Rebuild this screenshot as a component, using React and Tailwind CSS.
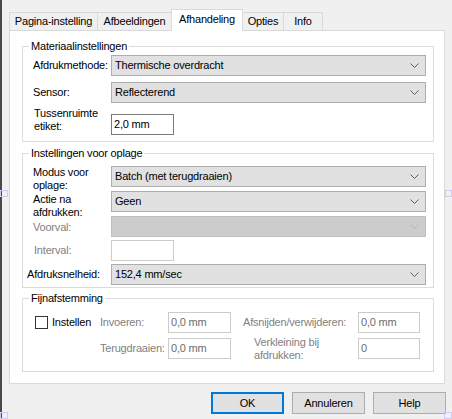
import React from "react";

const Chevron = ({ disabled }) => (
  <svg width="9" height="5" viewBox="0 0 9 5" className="shrink-0">
    <path d="M0.5 0.5 L4.5 4.5 L8.5 0.5" fill="none" stroke={disabled ? "#b4b4b4" : "#5f5f5f"} strokeWidth="1" />
  </svg>
);

function Select({ value = "", disabled }) {
  return (
    <div
      className={
        "flex items-center justify-between h-[21px] w-[315px] border pl-[3px] pr-[6px] " +
        (disabled ? "bg-[#cccccc] border-[#bfbfbf]" : "bg-[#e1e1e1] border-[#adadad]")
      }
    >
      <span>{value}</span>
      <Chevron disabled={disabled} />
    </div>
  );
}

function TextBox({ value = "", disabled, width = "w-[63px]" }) {
  return (
    <div
      className={
        "flex items-center h-[21px] bg-white border pl-[2px] " +
        width +
        (disabled ? " border-[#cccccc] text-[#6d6d6d]" : " border-[#7a7a7a]")
      }
    >
      {value}
    </div>
  );
}

function Row({ label, children, className = "", labelClass = "pl-[10px]", align = "items-center", gray }) {
  return (
    <div className={"flex h-[21px] " + align + " " + className}>
      <div className={"w-[88px] shrink-0 " + labelClass + (gray ? " text-[#7f7f7f]" : "")}>{label}</div>
      {children}
    </div>
  );
}

function Group({ title, children, className = "" }) {
  return (
    <fieldset className={"w-[412px] border border-[#dcdcdc] " + className}>
      <legend className="ml-[6px] px-[2px]">{title}</legend>
      {children}
    </fieldset>
  );
}

function Button({ children, primary }) {
  return (
    <button
      className={
        "h-[22px] w-[73px] bg-[#e1e1e1] flex items-center justify-center " +
        (primary ? "border-2 border-[#0078d7]" : "border border-[#adadad]")
      }
    >
      {children}
    </button>
  );
}

export default function App() {
  const tabs = [
    { name: "Pagina-instelling", w: "w-[88px]" },
    { name: "Afbeeldingen", w: "w-[74px]" },
    { name: "Afhandeling", w: "w-[72px]", active: true },
    { name: "Opties", w: "w-[40px]", noLeft: true },
    { name: "Info", w: "w-[40px]", last: true },
  ];

  return (
    <div className="relative w-[452px] h-[419px] bg-[#f0f0f0] text-black font-['Liberation_Sans',Arial,sans-serif] text-[11px] leading-[13px] tracking-[-0.2px] shadow-[inset_2px_0_0_#4a4a4a]">
      {/* tab strip */}
      <div className="flex items-end h-[30px] pl-[9px]">
        {tabs.map((t) =>
          t.active ? (
            <div
              key={t.name}
              className={"relative z-10 h-[22px] -mb-px bg-white border-l border-t border-r border-[#d9d9d9] flex justify-center pt-[3px] " + t.w}
            >
              {t.name}
            </div>
          ) : (
            <div
              key={t.name}
              className={
                "h-[18px] border-t border-[#d9d9d9] flex items-center justify-center " +
                (t.noLeft ? "" : "border-l ") +
                (t.last ? "border-r " : "") +
                t.w
              }
            >
              {t.name}
            </div>
          )
        )}
      </div>

      {/* panel */}
      <div className="ml-[9px] w-[436px] h-[354px] bg-white border border-[#d9d9d9] pl-[12px] pt-[9px]">
        <Group title="Materiaalinstellingen" className="pb-[6px]">
          <Row label="Afdrukmethode:" className="mt-[2px]">
            <Select value="Thermische overdracht" />
          </Row>
          <Row label="Sensor:" className="mt-[6px]">
            <Select value="Reflecterend" />
          </Row>
          <Row
            label={<>Tussenruimte<br />etiket:</>}
            className="mt-[11px]"
            align="items-start"
            labelClass="pl-[11px] -mt-[7px]"
          >
            <TextBox value="2,0 mm" />
          </Row>
        </Group>

        <Group title="Instellingen voor oplage" className="mt-[5px] pb-[2px]">
          <Row label={<>Modus voor<br />oplage:</>} className="mt-[6px]" align="items-start">
            <Select value="Batch (met terugdraaien)" />
          </Row>
          <Row label={<>Actie na<br />afdrukken:</>} className="mt-[4px]" align="items-start" labelClass="pl-[10px] mt-[2px]">
            <Select value="Geen" />
          </Row>
          <Row label="Voorval:" className="mt-[4px]" gray labelClass="pl-[10px] pt-[2px]">
            <Select disabled />
          </Row>
          <Row label="Interval:" className="mt-[3px]" gray labelClass="pl-[11px]">
            <TextBox disabled />
          </Row>
          <Row label="Afdruksnelheid:" className="mt-[3px]" labelClass="pl-[4px]">
            <Select value="152,4 mm/sec" />
          </Row>
        </Group>

        <Group title="Fijnafstemming" className="mt-[4px] pb-[12px]">
          <div className="flex items-center h-[21px] mt-[7px]">
            <div className="w-[77px] flex items-center pl-[12px]">
              <div className="w-[13px] h-[13px] border border-[#333333] bg-white" />
              <span className="ml-[4px]">Instellen</span>
            </div>
            <div className="w-[68px] text-[#7f7f7f]">Invoeren:</div>
            <TextBox value="0,0 mm" disabled />
            <div className="w-[12px]" />
            <div className="w-[115px] text-[#7f7f7f]">Afsnijden/verwijderen:</div>
            <TextBox value="0,0 mm" disabled width="w-[62px]" />
          </div>
          <div className="flex items-center h-[21px] mt-[5px]">
            <div className="w-[77px]" />
            <div className="w-[68px] text-[#7f7f7f]">Terugdraaien:</div>
            <TextBox value="0,0 mm" disabled />
            <div className="w-[23px]" />
            <div className="w-[104px] text-[#7f7f7f]">
              Verkleining bij
              <br />
              afdrukken:
            </div>
            <TextBox value="0" disabled width="w-[62px]" />
          </div>
        </Group>
      </div>

      {/* buttons */}
      <div className="flex justify-end gap-[8px] pr-[6px] mt-[8px]">
        <Button primary>OK</Button>
        <Button>Annuleren</Button>
        <Button>Help</Button>
      </div>

      {/* focus markers */}
      <div className="absolute left-0 top-[190px] w-[8px] h-[7px] border border-[#cfcbf3]" />
      <div className="absolute left-[445px] top-[190px] w-[7px] h-[7px] border border-[#cfcbf3]" />
      <div className="absolute left-0 top-[412px] w-[8px] h-[7px] border border-[#cfcbf3]" />
      <div className="absolute left-[444px] top-[412px] w-[8px] h-[7px] border border-[#cfcbf3]" />
    </div>
  );
}
